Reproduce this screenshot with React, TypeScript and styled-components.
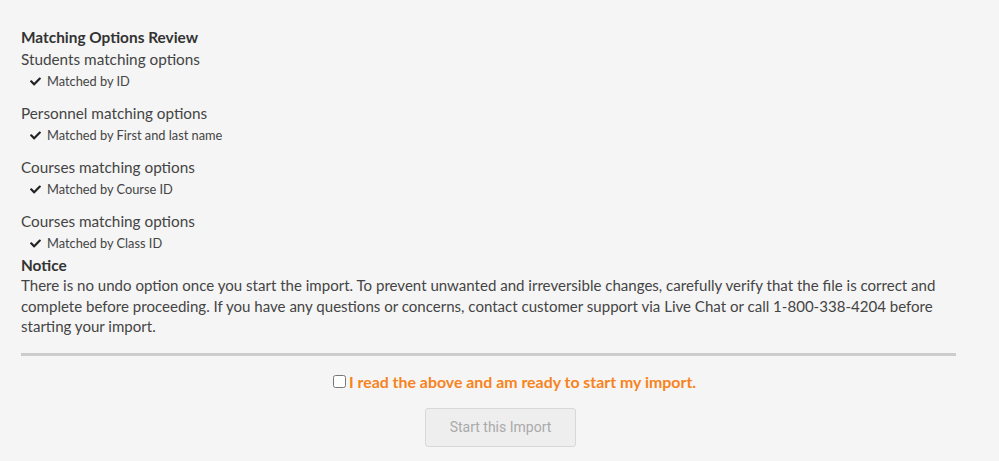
import React from "react";
import styled, { createGlobalStyle } from "styled-components";
import { FaCheck } from "react-icons/fa";

const Global = createGlobalStyle`
  html, body { margin: 0; padding: 0; background: #f5f5f5; }
  body { font-family: "Lato", "Liberation Sans", sans-serif; color: #444; }
`;

const Page = styled.div`
  width: 999px;
  min-height: 461px;
  box-sizing: border-box;
  padding: 26px 43px 0 21px;
`;

const Title = styled.div`
  font-weight: 700;
  font-size: 15.4px;
  line-height: 22px;
  color: #333;
`;

const Group = styled.div<{ $gap?: number }>`
  margin-bottom: ${(p) => p.$gap ?? 10}px;
`;

const GroupTitle = styled.div`
  font-size: 15.3px;
  line-height: 22px;
  color: #444;
`;

const Option = styled.div`
  display: flex;
  align-items: center;
  gap: 6px;
  padding-left: 9px;
  font-size: 12.8px;
  line-height: 22px;
  color: #444;
  svg { width: 11px; height: 11px; color: #222; }
`;

const NoticeTitle = styled.div`
  margin-top: 2px;
  font-weight: 700;
  font-size: 15.4px;
  line-height: 19px;
  color: #333;
`;

const Paragraph = styled.p`
  margin: 0;
  font-size: 15.05px;
  line-height: 20.5px;
  color: #444;
`;

const Rule = styled.hr`
  margin: 16px 0 0;
  border: 0;
  height: 3px;
  background: #cccccc;
`;

const ConfirmRow = styled.label`
  display: flex;
  justify-content: center;
  align-items: center;
  margin-top: 16px;
  padding-left: 52px;
  font-weight: 700;
  font-size: 15.9px;
  color: #f7831c;
  line-height: 20px;
  input { margin: 0 3px 0 0; width: 13px; height: 13px; }
`;

const ButtonRow = styled.div`
  display: flex;
  justify-content: center;
  margin-top: 16px;
  padding-left: 24px;
`;

const StartButton = styled.button`
  width: 151px;
  height: 39px;
  font-family: "Roboto", "Liberation Sans", sans-serif;
  font-size: 14px;
  color: #aaaaaa;
  background: #eeeeee;
  border: 1px solid #d8d8d8;
  border-radius: 3px;
`;

const groups = [
  { title: "Students matching options", option: "Matched by ID" },
  { title: "Personnel matching options", option: "Matched by First and last name" },
  { title: "Courses matching options", option: "Matched by Course ID" },
  { title: "Courses matching options", option: "Matched by Class ID" },
];

export default function App() {
  return (
    <>
      <Global />
      <Page>
        <Title>Matching Options Review</Title>
        {groups.map((g, i) => (
          <Group key={i} $gap={i === groups.length - 1 ? 0 : 10}>
            <GroupTitle>{g.title}</GroupTitle>
            <Option>
              <FaCheck />
              {g.option}
            </Option>
          </Group>
        ))}
        <NoticeTitle>Notice</NoticeTitle>
        <Paragraph>
          There is no undo option once you start the import. To prevent unwanted and irreversible changes, carefully
          verify that the file is correct and complete before proceeding. If you have any questions or concerns, contact
          customer support via Live Chat or call 1-800-338-4204 before starting your import.
        </Paragraph>
        <Rule />
        <ConfirmRow>
          <input type="checkbox" />I read the above and am ready to start my import.
        </ConfirmRow>
        <ButtonRow>
          <StartButton disabled>Start this Import</StartButton>
        </ButtonRow>
      </Page>
    </>
  );
}
